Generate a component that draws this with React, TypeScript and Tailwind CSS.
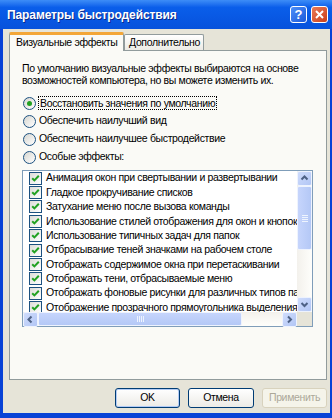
import React from "react";

const items = [
  "Анимация окон при свертывании и развертывании",
  "Гладкое прокручивание списков",
  "Затухание меню после вызова команды",
  "Использование стилей отображения для окон и кнопок",
  "Использование типичных задач для папок",
  "Отбрасывание теней значками на рабочем столе",
  "Отображать содержимое окна при перетаскивании",
  "Отображать тени, отбрасываемые меню",
  "Отображать фоновые рисунки для различных типов папок",
  "Отображение прозрачного прямоугольника выделения",
];

function Check() {
  return (
    <span className="w-[13px] h-[13px] shrink-0 border border-[#1c5180] bg-linear-to-br from-[#dcdcd7] to-white flex items-center justify-center">
      <svg width="9" height="9" viewBox="0 0 9 9">
        <path d="M1.2 4.2 L3.4 6.4 L7.8 1.8" stroke="#21a121" strokeWidth="2" fill="none" />
      </svg>
    </span>
  );
}

function Radio({ checked }: { checked?: boolean }) {
  return (
    <span className="w-[13px] h-[13px] shrink-0 rounded-full border border-[#1c5180] bg-linear-to-br from-[#d6d6d0] to-white flex items-center justify-center">
      {checked && <span className="w-[5px] h-[5px] rounded-full bg-[#21a121]" />}
    </span>
  );
}

function Arrow({ dir }: { dir: "up" | "down" | "left" | "right" }) {
  const pts: Record<string, string> = {
    up: "1.5,5.5 4.5,2.5 7.5,5.5",
    down: "1.5,3 4.5,6 7.5,3",
    left: "5.5,1.5 2.5,4.5 5.5,7.5",
    right: "3,1.5 6,4.5 3,7.5",
  };
  return (
    <svg width="9" height="9" viewBox="0 0 9 9">
      <polyline points={pts[dir]} stroke="#4d6185" strokeWidth="2" fill="none" />
    </svg>
  );
}

function SBtn({ dir }: { dir: "up" | "down" | "left" | "right" }) {
  return (
    <div className="w-[15px] h-[15px] shrink-0 rounded-[2px] border border-[#eef3fe] bg-linear-to-br from-[#cfdcfc] to-[#b2c6f5] flex items-center justify-center">
      <Arrow dir={dir} />
    </div>
  );
}

export default function App() {
  return (
    <div className="w-[332px] h-[418px] flex flex-col bg-[#0842d6] overflow-hidden font-['Liberation_Sans',sans-serif] text-[10.5px] tracking-[-0.35px] text-black">
      {/* Title bar */}
      <div className="h-[29px] shrink-0 flex items-center pl-[7px] pr-[4px] bg-linear-to-b from-[#3d8df7] via-[#0a5eea] via-25% to-[#0752dc]">
        <span className="flex-1 text-white font-bold text-[12px] tracking-[-0.1px] [text-shadow:1px_1px_0_#0b2a8a]">
          Параметры быстродействия
        </span>
        <div className="flex gap-[4px]">
          <div className="w-[17px] h-[17px] rounded-[3px] border border-white bg-linear-to-br from-[#4d8ff8] to-[#1c58da] flex items-center justify-center text-white font-bold text-[13px] tracking-normal leading-none">
            ?
          </div>
          <div className="w-[17px] h-[17px] rounded-[3px] border border-white bg-linear-to-br from-[#ea7a56] to-[#c93d16] flex items-center justify-center">
            <svg width="11" height="11" viewBox="0 0 11 11">
              <path d="M2 2 L9 9 M9 2 L2 9" stroke="white" strokeWidth="2" />
            </svg>
          </div>
        </div>
      </div>

      {/* Body */}
      <div className="flex-1 ml-[3px] mr-[2px] mb-[5px] bg-[#e6e4d8] flex flex-col pt-[3px] pl-[6px] pr-[3px] pb-[5px]">
        {/* Tabs */}
        <div className="h-[18px] flex items-end relative z-10">
          <div className="h-[19px] w-[115px] -mb-[1px] border-x border-[#919b9c] border-t-[3px] border-t-[#f3a637] rounded-t-[2px] bg-[#fafaf6] flex items-center pl-[6px] whitespace-nowrap">
            Визуальные эффекты
          </div>
          <div className="h-[16px] w-[80px] border border-b-0 border-[#919b9c] rounded-t-[2px] bg-linear-to-b from-white to-[#ecebe5] flex items-center pl-[4px] whitespace-nowrap">
            Дополнительно
          </div>
        </div>

        {/* Panel */}
        <div className="h-[330px] border border-[#919b9c] bg-[#fafaf6] pl-[12px] pt-[11px] flex flex-col">
          <div className="leading-[12px] whitespace-nowrap">
            <div>По умолчанию визуальные эффекты выбираются на основе</div>
            <div>возможностей компьютера, но вы можете изменить их.</div>
          </div>

          <div className="mt-[8px] flex flex-col whitespace-nowrap">
            <div className="h-[18px] flex items-center gap-[2px] pl-[1px]">
              <Radio checked />
              <span className="border border-dotted border-black px-[1px] leading-[12px]">
                Восстановить значения по умолчанию
              </span>
            </div>
            <div className="h-[18px] flex items-center gap-[3px] pl-[1px]">
              <Radio />
              <span>Обеспечить наилучший вид</span>
            </div>
            <div className="h-[18px] flex items-center gap-[3px] pl-[1px]">
              <Radio />
              <span>Обеспечить наилучшее быстродействие</span>
            </div>
            <div className="h-[18px] flex items-center gap-[3px] pl-[1px]">
              <Radio />
              <span>Особые эффекты:</span>
            </div>
          </div>

          {/* List box */}
          <div className="mt-[4px] w-[291px] h-[157px] border border-[#7f9db9] bg-white flex flex-col">
            <div className="flex-1 flex min-h-0">
              <div className="flex-1 overflow-hidden">
                {items.map((t) => (
                  <div key={t} className="h-[14.4px] flex items-center pl-[6px] gap-[4px] whitespace-nowrap">
                    <Check />
                    <span>{t}</span>
                  </div>
                ))}
              </div>
              <div className="w-[15px] flex flex-col bg-linear-to-r from-[#f3f1ec] to-[#fefefb]">
                <SBtn dir="up" />
                <div className="h-[64px] rounded-[2px] border border-[#eef3fe] bg-linear-to-r from-[#c6d5fc] to-[#b4c8f6] flex flex-col items-center justify-center gap-[1px]">
                  <div className="w-[6px] h-[1px] bg-[#eef4fe]" />
                  <div className="w-[6px] h-[1px] bg-[#eef4fe]" />
                  <div className="w-[6px] h-[1px] bg-[#eef4fe]" />
                  <div className="w-[6px] h-[1px] bg-[#eef4fe]" />
                </div>
                <div className="flex-1" />
                <SBtn dir="down" />
              </div>
            </div>
            <div className="h-[14px] flex">
              <div className="flex-1 flex bg-linear-to-b from-[#f3f1ec] to-[#fefefb]">
                <SBtn dir="left" />
                <div className="w-[204px] rounded-[2px] border border-[#eef3fe] bg-linear-to-b from-[#c6d5fc] to-[#b4c8f6] flex items-center justify-center gap-[1px]">
                  <div className="w-[1px] h-[6px] bg-[#eef4fe]" />
                  <div className="w-[1px] h-[6px] bg-[#eef4fe]" />
                  <div className="w-[1px] h-[6px] bg-[#eef4fe]" />
                  <div className="w-[1px] h-[6px] bg-[#eef4fe]" />
                </div>
                <div className="flex-1" />
                <SBtn dir="right" />
              </div>
              <div className="w-[15px] bg-[#e6e4d8]" />
            </div>
          </div>
        </div>

        {/* Buttons */}
        <div className="mt-[8px] flex justify-end gap-[8px]">
          <button className="w-[65px] h-[20px] rounded-[3px] border border-[#003c74] bg-linear-to-b from-white to-[#ecebe6] shadow-[inset_0_0_0_1px_#b2cbf5] text-[10.5px]">
            OK
          </button>
          <button className="w-[66px] h-[20px] rounded-[3px] border border-[#003c74] bg-linear-to-b from-white to-[#ecebe6] text-[10.5px]">
            Отмена
          </button>
          <button className="w-[65px] h-[20px] rounded-[3px] border border-[#d8d2bd] bg-[#f5f4ea] text-[#aca899] text-[10.5px]">
            Применить
          </button>
        </div>
      </div>
    </div>
  );
}
